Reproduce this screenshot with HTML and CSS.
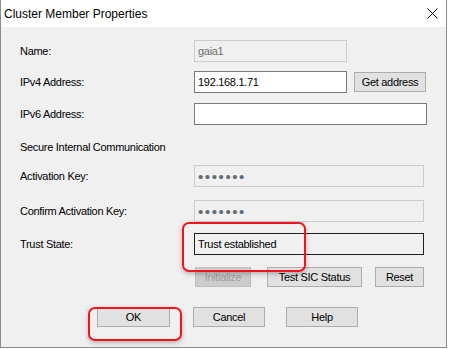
FILE: index.html
```html
<!DOCTYPE html>
<html lang="en">
<head>
    <meta charset="UTF-8">
    <title>Cluster Member Properties</title>
    <link rel="stylesheet" href="styles.css">
</head>
<body>
    <div class="window">
        <div class="titlebar">
            <span class="title">Cluster Member Properties</span>
            <svg class="close" width="11" height="11" viewBox="0 0 11 11">
                <path d="M0.5 0.5 L10.5 10.5 M10.5 0.5 L0.5 10.5" stroke="#000" stroke-width="1" fill="none"/>
            </svg>
        </div>

        <div class="content">
            <div class="row r-name">
                <span class="label">Name:</span>
                <div class="field disabled w-short">gaia1</div>
            </div>
            <div class="row r-ipv4">
                <span class="label">IPv4 Address:</span>
                <div class="field w-short">192.168.1.71</div>
                <button class="btn btn-get">Get address</button>
            </div>
            <div class="row r-ipv6">
                <span class="label">IPv6 Address:</span>
                <div class="field w-long"></div>
            </div>
            <div class="row r-sic">
                <span class="label">Secure Internal Communication</span>
            </div>
            <div class="row r-key">
                <span class="label">Activation Key:</span>
                <div class="field disabled dots w-mid">•••••••</div>
            </div>
            <div class="row r-confirm">
                <span class="label">Confirm Activation Key:</span>
                <div class="field disabled dots w-mid">•••••••</div>
            </div>
            <div class="row r-trust">
                <span class="label">Trust State:</span>
                <div class="field trust w-mid">Trust established</div>
            </div>
            <div class="row r-actions">
                <button class="btn btn-init" disabled>Initialize</button>
                <button class="btn btn-test">Test SIC Status</button>
                <button class="btn btn-reset">Reset</button>
            </div>
            <div class="row r-footer">
                <button class="btn btn-ok">OK</button>
                <button class="btn btn-cancel">Cancel</button>
                <button class="btn btn-help">Help</button>
            </div>
        </div>

        <!-- annotation marks -->
        <div class="mark mark-trust"></div>
        <div class="mark mark-ok"></div>
    </div>
</body>
</html>
```

FILE: styles.css
```css
* {
    margin: 0;
    padding: 0;
    box-sizing: border-box;
}
body {
    background: #fff;
    font-family: 'Liberation Sans', Arial, sans-serif;
    font-size: 11px;
    letter-spacing: -0.3px;
    color: #000;
}
.window {
    position: relative;
    width: 447px;
    height: 348px;
    background: #f0f0f0;
    border: 1px solid #8a8a8a;
    border-top: none;
}
.titlebar {
    height: 27px;
    background: #fff;
    display: flex;
    align-items: center;
    justify-content: space-between;
    padding: 0 8px 0 3px;
}
.title {
    font-family: 'Liberation Sans', Arial, sans-serif;
    font-size: 12px;
    letter-spacing: 0;
    color: #000;
}
.content {
    padding-left: 19px;
}
.row {
    display: flex;
    align-items: center;
    height: 22px;
}
.label {
    width: 174px;
    flex-shrink: 0;
}
.r-name { margin-top: 13px; }
.r-ipv4 { margin-top: 9px; }
.r-ipv6 { margin-top: 10px; }
.r-sic { margin-top: 11px; }
.r-key { margin-top: 7px; }
.r-confirm { margin-top: 13px; }
.r-trust { margin-top: 11px; }
.r-actions {
    margin-top: 12px;
    height: 20px;
    padding-left: 175px;
}
.r-footer {
    margin-top: 20px;
    height: 20px;
    padding-left: 77px;
}
.field {
    height: 22px;
    background: #fff;
    border: 1px solid #7a7a7a;
    padding: 0 3px;
    display: flex;
    align-items: center;
}
.field.disabled {
    background: #f0f0f0;
    border-color: #cccccc;
    color: #6d6d6d;
}
.field.dots {
    color: #626c76;
    font-size: 15px;
    letter-spacing: 1.6px;
    padding-left: 3px;
}
.field.trust {
    background: #f0f0f0;
    border-color: #1e1e1e;
}
.w-short { width: 153px; }
.w-long { width: 233px; }
.w-mid { width: 230px; }
.btn {
    height: 20px;
    background: #e1e1e1;
    border: 1px solid #adadad;
    font-family: 'Liberation Sans', Arial, sans-serif;
    font-size: 11px;
    letter-spacing: -0.3px;
    color: #000;
}
.btn:disabled {
    background: #cccccc;
    border-color: #bfbfbf;
    color: #a0a0a0;
}
.btn-get {
    width: 72px;
    margin-left: 7px;
}
.btn-init { width: 56px; }
.btn-test { width: 95px; margin-left: 16px; }
.btn-reset { width: 49px; margin-left: 13px; }
.btn-ok { width: 73px; }
.btn-cancel { width: 72px; margin-left: 23px; }
.btn-help { width: 72px; margin-left: 21px; }
.mark {
    position: absolute;
    border: 2px solid #f0141e;
    border-radius: 7px;
    box-shadow: 0 2px 5px rgba(0,0,0,0.25);
}
.mark-trust {
    left: 181px;
    top: 222px;
    width: 124px;
    height: 50px;
}
.mark-ok {
    left: 87px;
    top: 307px;
    width: 94px;
    height: 34px;
}
```
